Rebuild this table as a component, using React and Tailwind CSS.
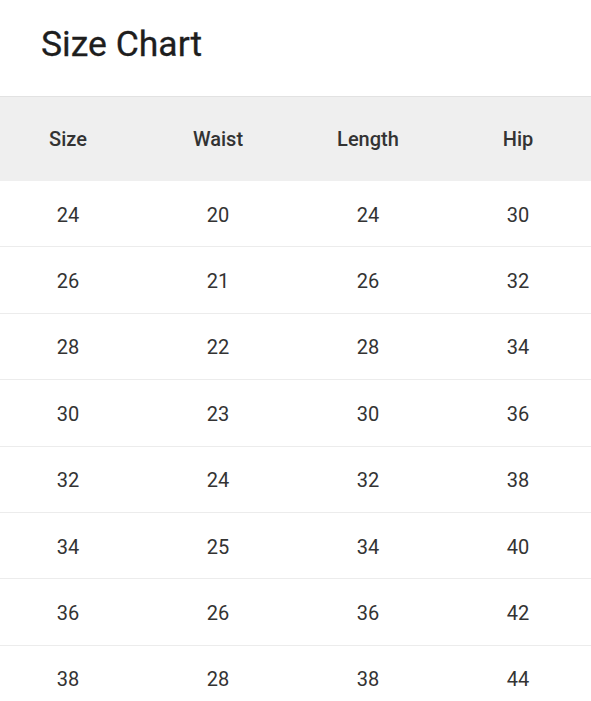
import React from "react";

const ROWS = [
  [24, 20, 24, 30],
  [26, 21, 26, 32],
  [28, 22, 28, 34],
  [30, 23, 30, 36],
  [32, 24, 32, 38],
  [34, 25, 34, 40],
  [36, 26, 36, 42],
  [38, 28, 38, 44],
];

const HEADERS = ["Size", "Waist", "Length", "Hip"];

export default function App() {
  return (
    <div className="w-[591px] h-[701px] overflow-hidden bg-white text-[#222] font-['Roboto',sans-serif]">
      {/* Title */}
      <div className="h-[96px] pl-[41px] pt-[22px]">
        <h1 className="text-[35.5px] leading-[44px] font-normal text-[#1e1e1e] [-webkit-text-stroke:0.3px_#1e1e1e]">
          Size Chart
        </h1>
      </div>

      {/* Table */}
      <div className="-ml-[7px] w-[600px] border-t border-[#e2e2e2]">
        <div className="grid grid-cols-[repeat(4,150px)] h-[84px] bg-[#efefef] items-center">
          {HEADERS.map((h) => (
            <div key={h} className="text-center text-[20px] font-medium text-[#333]">
              {h}
            </div>
          ))}
        </div>
        {ROWS.map((r, i) => (
          <div
            key={i}
            className="grid grid-cols-[repeat(4,150px)] h-[66.4px] items-center border-b border-[#ececec] pt-[2px]"
          >
            {r.map((v, j) => (
              <div key={j} className="text-center text-[20px] text-[#333]">
                {v}
              </div>
            ))}
          </div>
        ))}
      </div>
    </div>
  );
}
